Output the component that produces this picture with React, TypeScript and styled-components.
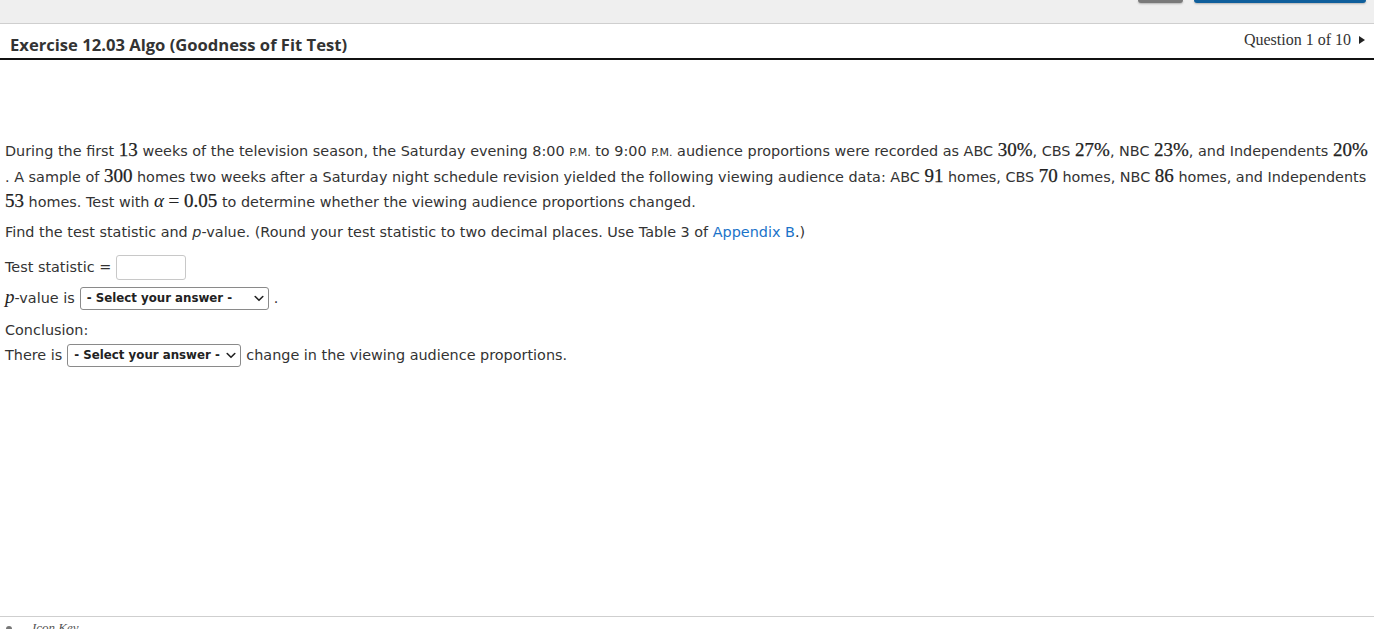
import styled, { createGlobalStyle } from "styled-components";

const GlobalStyle = createGlobalStyle`
  html, body {
    margin: 0;
    padding: 0;
    background: #ffffff;
  }
  body {
    font-family: "DejaVu Sans", Verdana, sans-serif;
    color: #333333;
  }
`;

const Page = styled.div`
  width: 1374px;
  height: 629px;
  overflow: hidden;
  display: flex;
  flex-direction: column;
`;

const TopBar = styled.div`
  height: 23px;
  flex-shrink: 0;
  background: #efefef;
  border-bottom: 1px solid #cfcfcf;
  display: flex;
  justify-content: flex-end;
  align-items: flex-start;
  gap: 11px;
  padding-right: 8px;
`;

const BarButton = styled.div<{ $tone: "gray" | "blue"; $w: number }>`
  width: ${(p) => p.$w}px;
  height: 3px;
  border-radius: 0 0 5px 5px;
  background: ${(p) => (p.$tone === "blue" ? "#0f5f9c" : "#7a7a7a")};
  box-shadow: 0 1px 2px rgba(0, 0, 0, 0.25);
`;

const Header = styled.header`
  box-sizing: border-box;
  height: 36px;
  flex-shrink: 0;
  display: flex;
  justify-content: space-between;
  align-items: flex-start;
  padding: 9px 9px 0 10px;
  border-bottom: 2px solid #111111;
`;

const Title = styled.h1`
  margin: 0;
  font-family: "Open Sans", sans-serif;
  font-size: 16.6px;
  font-weight: 700;
  color: #333333;
`;

const QuestionNav = styled.div`
  display: flex;
  align-items: center;
  gap: 8px;
  font-family: "Liberation Serif", "DejaVu Serif", serif;
  font-size: 16px;
  color: #333333;
  margin-top: -2px;
`;

const Arrow = styled.span`
  width: 0;
  height: 0;
  border-top: 4px solid transparent;
  border-bottom: 4px solid transparent;
  border-left: 6px solid #222222;
`;

const Body = styled.main`
  flex: 1;
  padding: 79px 0 0 5px;
  font-size: 14.4px;
  line-height: 25px;
`;

const Para = styled.p<{ $gap: number }>`
  margin: 0 0 ${(p) => p.$gap}px;
  white-space: nowrap;
`;

const Num = styled.span`
  font-family: "Liberation Serif", "DejaVu Serif", serif;
  font-size: 19px;
  line-height: 1;
  color: #222222;
  -webkit-text-stroke: 0.25px #222222;
`;

const MathVar = styled.span`
  font-family: "Liberation Serif", "DejaVu Serif", serif;
  font-style: italic;
  font-size: 19px;
  line-height: 1;
  color: #222222;
`;

const SmallCaps = styled.span`
  font-size: 11px;
`;

const Link = styled.a`
  color: #1a73c9;
  text-decoration: none;
`;

const Row = styled.div<{ $gap: number }>`
  display: flex;
  align-items: center;
  gap: 5px;
  height: 25px;
  margin-bottom: ${(p) => p.$gap}px;
  white-space: nowrap;
`;

const AnswerInput = styled.input`
  width: 70px;
  height: 25px;
  box-sizing: border-box;
  border: 1px solid #c8c8c8;
  border-radius: 3px;
  padding: 0 4px;
  font: inherit;
`;

const SelectBox = styled.div<{ $w: number }>`
  width: ${(p) => p.$w}px;
  height: 23px;
  box-sizing: border-box;
  border: 1px solid #8a8a8a;
  border-radius: 3px;
  display: flex;
  align-items: center;
  justify-content: space-between;
  padding: 0 4px 0 6px;
  font-size: 11.8px;
  font-weight: 700;
  color: #222222;
  background: #fff;
`;

const Footer = styled.footer`
  border-top: 1px solid #cfcfcf;
  height: 12px;
  flex-shrink: 0;
  display: flex;
  align-items: flex-end;
  gap: 20px;
  padding-left: 6px;
  overflow: hidden;
`;

const KeyIcon = styled.span`
  width: 6px;
  height: 6px;
  margin-bottom: -3px;
  border-radius: 50%;
  background: #777;
`;

const KeyLabel = styled.span`
  font-family: "Liberation Serif", serif;
  font-style: italic;
  font-size: 13px;
  color: #555;
  line-height: 1;
  margin-bottom: -5px;
`;

function Chevron() {
  return (
    <svg width="10" height="7" viewBox="0 0 10 7">
      <path
        d="M1.2 1.5 L5 5.3 L8.8 1.5"
        fill="none"
        stroke="#222"
        strokeWidth="1.6"
        strokeLinecap="round"
        strokeLinejoin="round"
      />
    </svg>
  );
}

function Select({ width }: { width: number }) {
  return (
    <SelectBox $w={width}>
      <span>- Select your answer -</span>
      <Chevron />
    </SelectBox>
  );
}

export default function App() {
  return (
    <Page>
      <GlobalStyle />
      <TopBar>
        <BarButton $tone="gray" $w={45} />
        <BarButton $tone="blue" $w={172} />
      </TopBar>
      <Header>
        <Title>Exercise 12.03 Algo (Goodness of Fit Test)</Title>
        <QuestionNav>
          Question 1 of 10 <Arrow />
        </QuestionNav>
      </Header>
      <Body>
        <Para $gap={5}>
          During the first <Num>13</Num> weeks of the television season, the Saturday evening 8:00{" "}
          <SmallCaps>P.M.</SmallCaps> to 9:00 <SmallCaps>P.M.</SmallCaps> audience proportions were recorded
          as ABC <Num>30%</Num>, CBS <Num>27%</Num>, NBC <Num>23%</Num>, and Independents <Num>20%</Num>
          <br />. A sample of <Num>300</Num> homes two weeks after a Saturday night schedule revision yielded
          the following viewing audience data: ABC <Num>91</Num> homes, CBS <Num>70</Num> homes, NBC{" "}
          <Num>86</Num> homes, and Independents
          <br />
          <Num>53</Num> homes. Test with <MathVar>α</MathVar> <Num>= 0.05</Num> to determine whether the
          viewing audience proportions changed.
        </Para>
        <Para $gap={10}>
          Find the test statistic and <i>p</i>-value. (Round your test statistic to two decimal places. Use
          Table 3 of <Link href="#">Appendix B</Link>.)
        </Para>
        <Row $gap={6}>
          Test statistic = <AnswerInput />
        </Row>
        <Row $gap={7}>
          <span>
            <MathVar>p</MathVar>-value is
          </span>
          <Select width={189} />
          <span>.</span>
        </Row>
        <Row $gap={0}>Conclusion:</Row>
        <Row $gap={0}>
          There is <Select width={174} /> change in the viewing audience proportions.
        </Row>
      </Body>
      <Footer>
        <KeyIcon />
        <KeyLabel>Icon Key</KeyLabel>
      </Footer>
    </Page>
  );
}
